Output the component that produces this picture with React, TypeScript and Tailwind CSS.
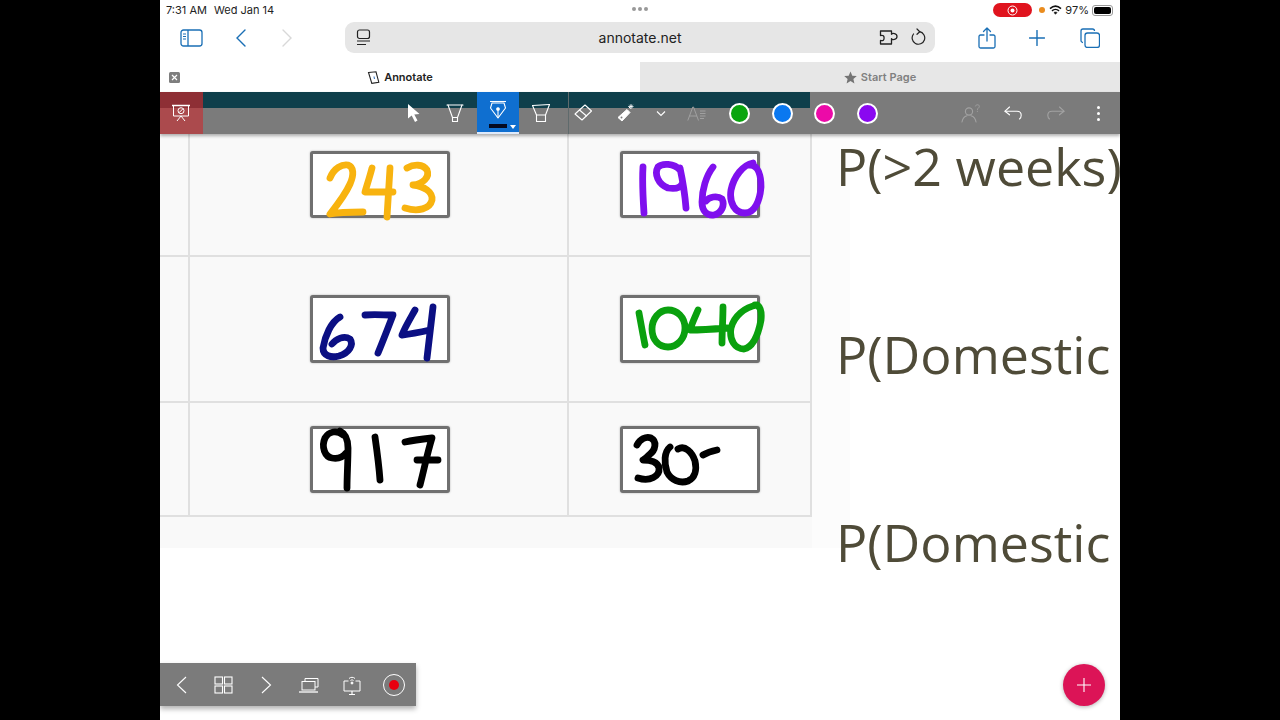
import React from "react";

const font = { fontFamily: '"Inter", "Liberation Sans", sans-serif' };

function Ink({ x, y, w, h, color, d }: { x: number; y: number; w: number; h: number; color: string; d: string }) {
  return (
    <svg
      className="absolute -left-[3px] -top-[3px] overflow-visible"
      width={w}
      height={h}
      viewBox={`${x} ${y} ${w} ${h}`}
      fill="none"
      stroke={color}
      strokeWidth={6.8}
      strokeLinecap="round"
      strokeLinejoin="round"
    >
      <path d={d} />
    </svg>
  );
}

function Box({ h, x, y, color, d }: { h: string; x: number; y: number; color: string; d: string }) {
  const height = h === "h-[66px]" ? 66 : h === "h-[68px]" ? 68 : 67;
  return (
    <div className={`relative w-[140px] ${h} bg-white border-[3px] border-[#707070] rounded-[3px] shadow-[0_0_2px_#aaa]`}>
      <Ink x={x} y={y} w={140} h={height} color={color} d={d} />
    </div>
  );
}

function Ico({ size = 24, children, stroke = "white", sw = 1.3, vb }: { size?: number; children: React.ReactNode; stroke?: string; sw?: number; vb?: string }) {
  return (
    <svg width={size} height={size} viewBox={vb ?? "0 0 24 24"} fill="none" stroke={stroke} strokeWidth={sw} strokeLinecap="round" strokeLinejoin="round">
      {children}
    </svg>
  );
}

function ToolBtn({ children, className = "" }: { children: React.ReactNode; className?: string }) {
  return <div className={`relative z-10 w-[42.67px] h-full flex items-center justify-center shrink-0 ${className}`}>{children}</div>;
}

function Dot({ c }: { c: string }) {
  return (
    <ToolBtn>
      <div className={`w-[21px] h-[21px] rounded-full border-2 border-white ${c}`} />
    </ToolBtn>
  );
}

const blue = "#1a6fb5";

export default function App() {
  return (
    <div className="w-[1280px] h-[720px] bg-black flex justify-center overflow-hidden" style={font}>
      <div className="relative w-[960px] h-full bg-white overflow-hidden flex flex-col">
        {/* status bar */}
        <div className="h-[20px] shrink-0 flex items-center pl-[6px] pr-[7px] text-[11px] text-[#222] relative">
          <span className="w-[48px]">7:31 AM</span>
          <span>Wed Jan 14</span>
          <div className="absolute left-0 top-[7px] w-full flex justify-center gap-[2px]">
            <span className="w-[4px] h-[4px] rounded-full bg-[#999]" />
            <span className="w-[4px] h-[4px] rounded-full bg-[#999]" />
            <span className="w-[4px] h-[4px] rounded-full bg-[#999]" />
          </div>
          <div className="flex-1" />
          <div className="w-[39px] h-[14px] rounded-full bg-[#e0141e] flex items-center justify-center">
            <svg width="11" height="11" viewBox="0 0 11 11" fill="none">
              <circle cx="5.5" cy="5.5" r="4.5" stroke="white" strokeWidth="1" />
              <circle cx="5.5" cy="5.5" r="2" fill="white" />
            </svg>
          </div>
          <span className="ml-[7px] w-[6px] h-[6px] rounded-full bg-[#ea8c1e]" />
          <svg className="ml-[4px]" width="13" height="10" viewBox="0 0 13 10" fill="none" stroke="#111" strokeWidth="1.6">
            <path d="M1 3.6C4.4.6 8.6.6 12 3.6" />
            <path d="M3 5.8C5 4 8 4 10 5.8" />
            <path d="M6.5 9.2 4.9 7.6C5.8 6.9 7.2 6.9 8.1 7.6Z" fill="#111" strokeWidth="0.6" />
          </svg>
          <span className="ml-[3px]">97%</span>
          <div className="ml-[3px] w-[21px] h-[11px] rounded-[3px] border border-[#999] p-[1px]">
            <div className="w-full h-full bg-black rounded-[2px]" />
          </div>
        </div>

        {/* nav bar */}
        <div className="h-[42px] shrink-0 flex items-start pt-[2px] relative">
          <div className="w-[185px] h-[31px] flex items-center shrink-0">
            <div className="ml-[20px]">
              <svg width="24" height="18" viewBox="0 0 24 18" fill="none" stroke={blue} strokeWidth="1.3">
                <rect x="1" y="1" width="21" height="16" rx="2.5" />
                <path d="M8 1v16" />
                <path d="M3 5h3M3 7.5h3M3 10h3" strokeWidth="1" />
              </svg>
            </div>
            <div className="ml-[31px]">
              <svg width="12" height="18" viewBox="0 0 12 18" fill="none" stroke={blue} strokeWidth="1.4" strokeLinecap="round">
                <path d="M10 1 2 9l8 8" />
              </svg>
            </div>
            <div className="ml-[34px]">
              <svg width="12" height="18" viewBox="0 0 12 18" fill="none" stroke="#d8d8d8" strokeWidth="1.4" strokeLinecap="round">
                <path d="M2 1l8 8-8 8" />
              </svg>
            </div>
          </div>
          <div className="w-[590px] h-[31px] bg-[#e6e6e6] rounded-[9px] flex items-center shrink-0 relative">
            <div className="absolute left-[11px] top-[7px]">
              <svg width="15" height="17" viewBox="0 0 15 17" fill="none" stroke="#222" strokeWidth="1.2">
                <rect x="1.5" y="1" width="12" height="8.5" rx="2" />
                <path d="M1 12h13M1 15.5h9" />
              </svg>
            </div>
            <div className="w-full text-center text-[14px] text-[#222] -mt-[1px]">annotate.net</div>
            <div className="absolute left-[534px] top-[7px]">
              <svg width="20" height="17" viewBox="0 0 20 17" fill="none" stroke="#222" strokeWidth="1.3" strokeLinejoin="round">
                <path d="M1.5 2h11v3.3c.6-1.2 5.5-1.4 5.5 2.2s-4.900 3.400-5.500 2.200V15h-11v-3.600c2.800.8 3.600-.6 3.600-2.400S4.300 5.800 1.500 6.600Z" />
              </svg>
            </div>
            <div className="absolute left-[565px] top-[6px]">
              <svg width="16" height="17" viewBox="0 0 16 17" fill="none" stroke="#222" strokeWidth="1.2" strokeLinecap="round">
                <path d="M9.500 3.700A6.300 6.300 0 1 1 3.500 6" />
                <path d="M7 1 9.800 3.700 7 6.300" />
              </svg>
            </div>
          </div>
          <div className="flex-1 h-[31px] flex items-center">
            <div className="ml-[43px]">
              <svg width="18" height="22" viewBox="0 0 18 22" fill="none" stroke={blue} strokeWidth="1.3" strokeLinecap="round" strokeLinejoin="round">
                <path d="M6 8H2.500A1.500 1.500 0 0 0 1 9.500V19.500A1.500 1.500 0 0 0 2.500 21h13a1.500 1.500 0 0 0 1.500-1.500V9.500A1.500 1.500 0 0 0 15.500 8H12" />
                <path d="M9 14V1M5.500 4.500 9 1l3.500 3.500" />
              </svg>
            </div>
            <div className="ml-[33px]">
              <svg width="16" height="16" viewBox="0 0 16 16" fill="none" stroke={blue} strokeWidth="1.4" strokeLinecap="round">
                <path d="M8 .5v15M.5 8h15" />
              </svg>
            </div>
            <div className="ml-[35px]">
              <svg width="20" height="20" viewBox="0 0 20 20" fill="none" stroke={blue} strokeWidth="1.3">
                <path d="M3 14.500A2 2 0 0 1 1 12.500V3a2 2 0 0 1 2-2h9.500a2 2 0 0 1 2 2" />
                <rect x="5" y="5" width="14.5" height="14.5" rx="2.5" />
              </svg>
            </div>
          </div>
        </div>

        {/* tabs */}
        <div className="h-[30px] shrink-0 flex text-[11px] font-semibold">
          <div className="w-[480px] relative flex items-center justify-center gap-[4px] bg-white text-[#222]">
            <div className="absolute left-[9px] top-[10px] w-[11px] h-[11px] rounded-[1.5px] bg-[#7e7e7e] flex items-center justify-center">
              <svg width="7" height="7" viewBox="0 0 7 7" stroke="white" strokeWidth="1.2">
                <path d="M1 1l5 5M6 1 1 6" />
              </svg>
            </div>
            <svg width="13" height="13" viewBox="0 0 13 13" fill="white" stroke="#222" strokeWidth="1.1">
              <path d="M1.500 1.500 9 .8l2.800 10.400-7 1.200Z" />
              <path d="M7 5.500 7.500 8" stroke="#3a78c2" />
            </svg>
            <span>Annotate</span>
          </div>
          <div className="flex-1 flex items-center justify-center gap-[4px] bg-[#e7e7e7] text-[#808080]">
            <svg width="13" height="13" viewBox="0 0 13 13" fill="#747474">
              <path d="M6.500.5 8.300 4.700 12.800 5 9.400 8 10.400 12.500 6.500 10.100 2.600 12.500 3.600 8 .2 5 4.700 4.700Z" />
            </svg>
            <span>Start Page</span>
          </div>
        </div>

        {/* annotation toolbar */}
        <div className="h-[42px] shrink-0 relative flex bg-[#7b7b7b] shadow-[0_2px_3px_rgba(0,0,0,0.3)] z-20">
          <div className="absolute left-[43px] top-0 w-[607px] h-[16px] bg-[#0f3f4b]" />
          <div className="absolute left-[408px] top-0 w-px h-full bg-[#5f6a6c]" />
          <div className="relative z-10 w-[43px] h-full bg-[#ab4a4d] flex items-center justify-center shrink-0">
            <div className="absolute left-0 top-0 w-full h-[16px] bg-[#8e2f35]" />
            <div className="relative -ml-[1px]">
              <svg width="18" height="18" viewBox="0 0 18 18" fill="none" stroke="white" strokeWidth="1">
                <path d="M0 1.500h18" strokeWidth="1.5" />
                <path d="M1.500 1.500v10.500h15V1.500" />
                <circle cx="9" cy="6.700" r="3" />
                <path d="M6.900 8.800l4.200-4.200" />
                <path d="M9 12l-4 5M9 12l4 5" />
              </svg>
            </div>
          </div>
          <div className="w-[188.5px] shrink-0" />
          <ToolBtn>
            <svg className="ml-[3px]" width="14" height="18" viewBox="0 0 14 18" fill="white">
              <path d="M1 0 1 14.500 4.700 11.500 8 18 10.500 16.500 7.300 10.500 12.500 10Z" />
            </svg>
          </ToolBtn>
          <ToolBtn>
            <Ico size={20} vb="0 0 20 20" sw={1.1}>
              <path d="M2 2h16" />
              <path d="M3 2l4.500 12.500v4h5v-4L17 2" />
              <path d="M7.500 14.500h5" />
            </Ico>
          </ToolBtn>
          <ToolBtn className="bg-[#0f6fd0] border-b-2 border-[#dfeafa]">
            <div className="relative -mt-[5px]">
              <svg width="18" height="20" viewBox="0 0 18 20" fill="none" stroke="white" strokeWidth="1.1" strokeLinejoin="round">
                <path d="M1 1.500h16" />
                <path d="M3 3 1.500 8l7.500 10 7.500-10L15 3Z" />
                <path d="M9 9v9" />
                <circle cx="9" cy="9" r="1.300" fill="white" />
              </svg>
            </div>
            <div className="absolute left-[12px] bottom-[4px] w-[18px] h-[4px] bg-[#050a20]" />
            <div className="absolute right-[3px] bottom-[3px] w-0 h-0 border-l-[3px] border-r-[3px] border-t-[4px] border-l-transparent border-r-transparent border-t-white" />
          </ToolBtn>
          <ToolBtn>
            <Ico size={20} vb="0 0 20 20" sw={1.1}>
              <path d="M1.500 2.500 18.500 1.500" />
              <path d="M1.500 2.500 5.500 12v6.500h9V12l4-10.500" />
              <path d="M5.500 12h9" />
            </Ico>
          </ToolBtn>
          <ToolBtn>
            <Ico size={20} vb="0 0 20 20" sw={1.1}>
              <path d="M12 2 18.500 8 9 17 2 11Z" />
              <path d="M6.500 7 13.500 13" />
            </Ico>
          </ToolBtn>
          <ToolBtn>
            <svg width="20" height="20" viewBox="0 0 20 20" fill="white" stroke="white">
              <path d="M11 6.500 14 9.500 6 18 2 14.500Z" strokeWidth="1" />
              <path d="M14.500 5.500 12.500 3.500" strokeWidth="1" />
              <path d="M15 1v5M12.500 3.500h5M13.300 1.800l3.400 3.400M16.700 1.800l-3.400 3.400" strokeWidth="0.8" />
              <circle cx="5.500" cy="14.500" r="1" fill="#7b7b7b" stroke="none" />
            </svg>
          </ToolBtn>
          <div className="relative z-10 w-[28px] h-full flex items-center justify-center shrink-0">
            <svg width="10" height="7" viewBox="0 0 10 7" fill="none" stroke="white" strokeWidth="1.1">
              <path d="M1 1.500 5 5.500 9 1.500" />
            </svg>
          </div>
          <ToolBtn>
            <svg width="19" height="15" viewBox="0 0 19 15" fill="none" stroke="#a0a0a0" strokeWidth="1">
              <path d="M.8 14.500 5.800 1h.7l5 13.500M2.500 10h7.500" />
              <path d="M13 5h5.500M13 7.500h5.500M13 10h5.500M13 12.500h4" />
            </svg>
          </ToolBtn>
          <Dot c="bg-[#0aa50f]" />
          <Dot c="bg-[#0a78f0]" />
          <Dot c="bg-[#ec0aa8]" />
          <Dot c="bg-[#8a08f0]" />
          <div className="flex-1" />
          <ToolBtn>
            <svg width="20" height="20" viewBox="0 0 20 20" fill="none" stroke="#a2a2a2" strokeWidth="1.1" strokeLinecap="round">
              <circle cx="8" cy="8.500" r="3.600" />
              <path d="M1 19c.6-4 3-5.800 5-6.300M15 19c-.6-4-3-5.800-5-6.300" />
              <path d="M14.500 3c.3-1.800 3.800-1.800 3.800.4 0 1.700-1.900 1.500-1.900 3.100M16.400 8.200v.3" strokeWidth="0.9" />
            </svg>
          </ToolBtn>
          <ToolBtn>
            <svg width="18" height="14" viewBox="0 0 18 14" fill="none" stroke="white" strokeWidth="1.1" strokeLinecap="round" strokeLinejoin="round">
              <path d="M5.500 1 1 5.200l4.500 3.600" />
              <path d="M1 5.200h12c3 0 4.200 2 4.200 4 0 1.700-.7 3-1.700 3.800" />
            </svg>
          </ToolBtn>
          <ToolBtn>
            <svg width="18" height="14" viewBox="0 0 18 14" fill="none" stroke="#a2a2a2" strokeWidth="1.1" strokeLinecap="round" strokeLinejoin="round">
              <path d="M12.500 1 17 5.200l-4.500 3.600" />
              <path d="M17 5.200H5c-3 0-4.200 2-4.200 4 0 1.700.7 3 1.700 3.800" />
            </svg>
          </ToolBtn>
          <ToolBtn>
            <div className="flex flex-col gap-[3px]">
              <span className="w-[3px] h-[3px] bg-white rounded-full" />
              <span className="w-[3px] h-[3px] bg-white rounded-full" />
              <span className="w-[3px] h-[3px] bg-white rounded-full" />
            </div>
          </ToolBtn>
        </div>

        {/* document */}
        <div className="flex-1 relative flex items-start">
          <div className="absolute left-[650px] top-0 w-[40px] h-[414px] bg-[#fcfcfc]" />
          <div className="relative w-[652px] h-[414px] bg-[#f9f9f9] shrink-0">
            <div className="grid grid-cols-[30px_379px_243px] grid-rows-[123px_146px_114px]">
              <div className="border-r-2 border-b-2 border-[#e0e0e0]" />
              <div className="border-r-2 border-b-2 border-[#e0e0e0] pt-[17px] pl-[120px]">
                <Box
                  h="h-[67px]"
                  x={310}
                  y={151}
                  color="#f8b30f"
                  d="M330 178C334 168 342 164 348 165C354 167 354 175 350 184C346 193 338 204 330 214C340 212 352 212 363 212M372 168C370 176 367 185 365 192C374 192 384 192 393 192M390 168C389 184 388 200 387 217M407 168C414 164 423 164 427 170C430 177 423 184 413 185C424 186 433 192 432 200C430 209 418 212 405 208"
                />
              </div>
              <div className="border-r-2 border-b-2 border-[#e0e0e0] pt-[17px] pl-[51px]">
                <Box
                  h="h-[67px]"
                  x={620}
                  y={151}
                  color="#7f10ee"
                  d="M643 167C642 183 643 198 644 213M680 170C674 163 662 163 658 167C654 174 658 184 668 188C674 189 680 188 682 184M680 168C683 182 685 195 686 208M713 167C706 176 702 190 702 202C702 211 707 216 714 215C722 213 725 205 722 199C717 195 709 197 706 201M753 163C743 165 734 176 731 190C729 203 735 213 745 213C755 213 760 200 761 187C761 175 758 165 750 165"
                />
              </div>
              <div className="border-r-2 border-b-2 border-[#e0e0e0]" />
              <div className="border-r-2 border-b-2 border-[#e0e0e0] pt-[38px] pl-[120px]">
                <Box
                  h="h-[68px]"
                  x={310}
                  y={295}
                  color="#0b0f83"
                  d="M340 317C331 322 325 336 323 348C323 356 331 358 339 356C349 353 354 345 350 339C344 335 336 339 332 344M365 315C374 314 384 315 393 315C388 328 383 341 378 353M415 310C410 319 405 327 402 335C411 334 421 332 430 330M433 307C431 324 429 341 427 358"
                />
              </div>
              <div className="border-r-2 border-b-2 border-[#e0e0e0] pt-[38px] pl-[51px]">
                <Box
                  h="h-[68px]"
                  x={620}
                  y={295}
                  color="#0aa00e"
                  d="M639 313C641 324 643 335 645 345M668 310C659 310 652 319 652 329C652 340 659 347 668 347C677 347 685 339 685 328C685 317 677 310 668 310M698 310C695 317 692 323 690 330C702 330 715 329 727 328M723 307C723 319 722 331 722 343M757 305C745 307 734 316 731 328C729 340 735 349 744 349C753 347 758 336 761 320C762 311 760 305 755 305"
                />
              </div>
              <div className="border-r-2 border-b-2 border-[#e0e0e0]" />
              <div className="border-r-2 border-b-2 border-[#e0e0e0] pt-[23px] pl-[120px]">
                <Box
                  h="h-[67px]"
                  x={310}
                  y={426}
                  color="#000000"
                  d="M343 435C337 430 329 431 325 438C321 447 325 457 332 458C338 459 343 457 346 453M340 431C346 434 348 440 348 448C348 462 347 475 347 488M375 437C377 451 379 466 380 480M405 442C414 440 423 439 432 438C427 454 424 470 420 485M417 460C424 460 431 460 438 460"
                />
              </div>
              <div className="border-r-2 border-b-2 border-[#e0e0e0] pt-[23px] pl-[51px]">
                <Box
                  h="h-[67px]"
                  x={620}
                  y={426}
                  color="#000000"
                  d="M637 445C640 439 646 436 651 438C657 441 656 450 649 455C647 457 645 459 643 460C650 460 658 462 659 468C660 476 650 482 638 478M670 447C664 452 664 463 667 472C671 480 680 484 688 481C695 478 697 470 695 461C692 452 685 445 678 449M703 455C708 452 712 451 717 450"
                />
              </div>
            </div>
          </div>
          <div
            className="relative pl-[24px] flex flex-col text-[52px] leading-[64px] text-[#4f4b38] whitespace-nowrap"
            style={{ fontFamily: '"Open Sans", "Noto Sans", sans-serif' }}
          >
            <div className="h-[188px]">P(&gt;2 weeks)</div>
            <div className="h-[188px]">P(Domestic</div>
            <div className="h-[188px]">P(Domestic</div>
          </div>
        </div>

        {/* bottom presentation bar */}
        <div className="absolute left-0 top-[663px] w-[256px] h-[43px] bg-[#7b7b7b] shadow-[0_3px_5px_rgba(0,0,0,0.3)] flex items-center z-30">
          <div className="w-[42.5px] flex justify-center">
            <svg width="11" height="18" viewBox="0 0 11 18" fill="none" stroke="white" strokeWidth="1.1">
              <path d="M10 1 1.500 9l8.500 8" />
            </svg>
          </div>
          <div className="w-[42.5px] flex justify-center">
            <svg width="19" height="18" viewBox="0 0 19 18" fill="none" stroke="white" strokeWidth="1.1">
              <rect x="1" y="1" width="7.5" height="7" />
              <rect x="10.5" y="1" width="7.5" height="7" />
              <rect x="1" y="10" width="7.5" height="7" />
              <rect x="10.5" y="10" width="7.5" height="7" />
            </svg>
          </div>
          <div className="w-[42.5px] flex justify-center">
            <svg width="11" height="18" viewBox="0 0 11 18" fill="none" stroke="white" strokeWidth="1.1">
              <path d="M1 1 9.500 9 1 17" />
            </svg>
          </div>
          <div className="w-[42.5px] flex justify-center">
            <svg width="20" height="16" viewBox="0 0 20 16" fill="none" stroke="white" strokeWidth="1">
              <rect x="3" y="4.5" width="13" height="8.5" />
              <path d="M6 4.500V1.500h13v8.500h-3" />
              <path d="M0 15h19" strokeWidth="1.3" />
            </svg>
          </div>
          <div className="w-[42.5px] flex justify-center">
            <svg className="ml-[1px]" width="18" height="20" viewBox="0 0 18 20" fill="none" stroke="white" strokeWidth="1">
              <path d="M5.500 6H1v10h16V6h-4.500" />
              <path d="M6 3.500c1.700-1.600 4.300-1.600 6 0M7.500 5.500c.9-.8 2.100-.8 3 0" />
              <circle cx="9" cy="8" r="1" fill="white" />
              <path d="M9 16v3M6 19.500h6" strokeWidth="1.2" />
            </svg>
          </div>
          <div className="w-[42.5px] flex justify-center">
            <div className="w-[22px] h-[22px] rounded-full border border-white flex items-center justify-center">
              <div className="w-[10px] h-[10px] rounded-full bg-[#e8000f]" />
            </div>
          </div>
        </div>

        {/* floating add button */}
        <div className="absolute left-[903px] top-[664px] w-[42px] h-[42px] rounded-full bg-[#dc1457] shadow-[0_1px_4px_rgba(0,0,0,0.3)] flex items-center justify-center z-30">
          <svg width="14" height="14" viewBox="0 0 14 14" stroke="white" strokeWidth="1.1">
            <path d="M7 0v14M0 7h14" />
          </svg>
        </div>
      </div>
    </div>
  );
}
